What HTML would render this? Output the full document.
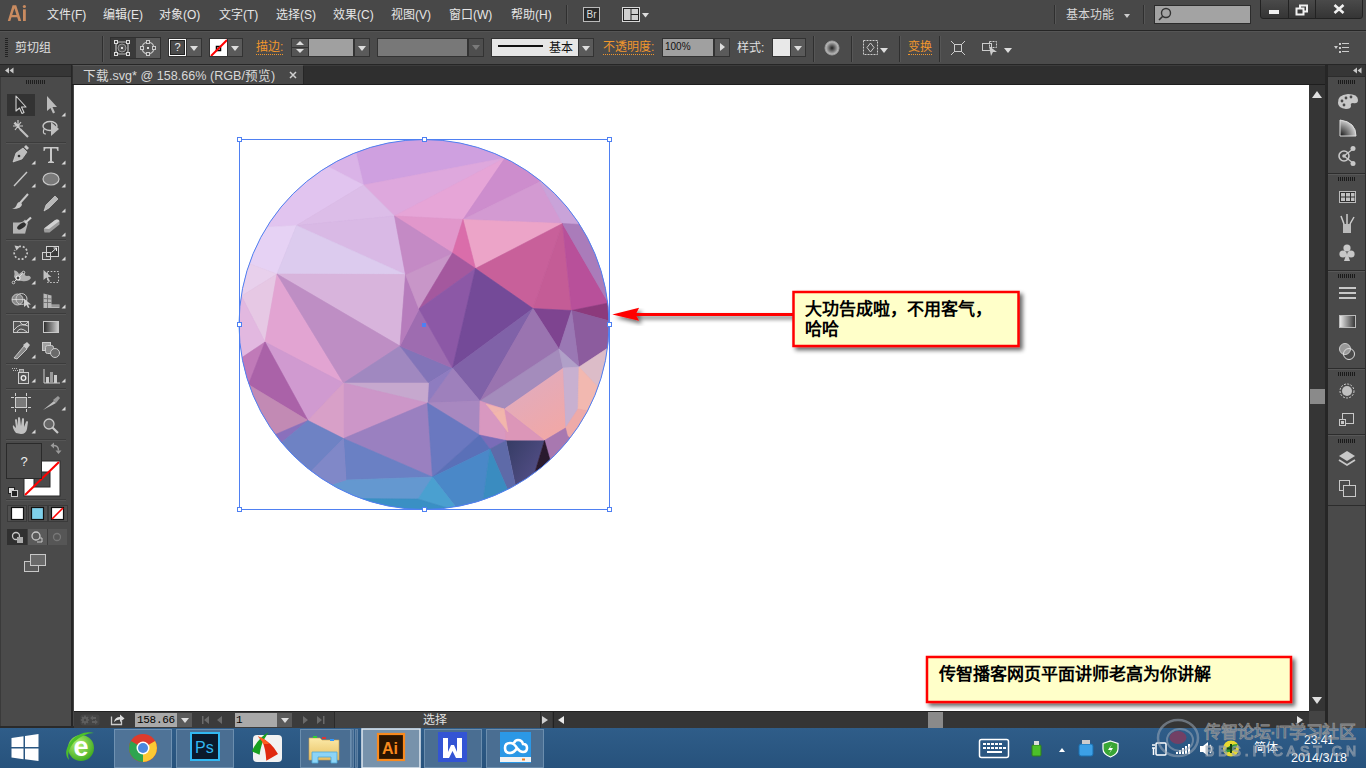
<!DOCTYPE html>
<html lang="zh-CN"><head><meta charset="utf-8">
<style>
*{margin:0;padding:0;box-sizing:border-box}
html,body{width:1366px;height:768px;overflow:hidden;background:#474747;font-family:"Liberation Sans",sans-serif;}
.a{position:absolute}
#menubar{left:0;top:0;width:1366px;height:31px;background:#484848;border-bottom:1px solid #262626}
#ctrl{left:0;top:31px;width:1366px;height:34px;background:#4b4b4b;border-top:1px solid #555;border-bottom:1px solid #262626}
.mi{position:absolute;top:7px;font-size:12px;color:#e6e6e6;line-height:16px;white-space:nowrap}
.sep{position:absolute;width:1px;background:#2f2f2f;border-right:1px solid #565656;width:2px}
.t12{position:absolute;font-size:12px;line-height:14px;color:#e0e0e0;white-space:nowrap}
.or{color:#f0962d}
.dd{position:absolute;background:#5a5a5a;border:1px solid #333}
.dd:after{content:"";position:absolute;left:50%;top:50%;margin-left:-4px;margin-top:-2px;border-left:4px solid transparent;border-right:4px solid transparent;border-top:5px solid #ddd}
#lpanel{left:0;top:65px;width:73px;height:663px;background:#4a4a4a}
#tabbar{left:72px;top:65px;width:1256px;height:20px;background:#2f2f2f}
#canvas{left:74px;top:85px;width:1235px;height:626px;background:#fff}
#vscroll{left:1309px;top:85px;width:16px;height:626px;background:#353535}
#rpanel{left:1328px;top:65px;width:38px;height:663px;background:#464646}
#hscroll{left:74px;top:711px;width:1235px;height:17px;background:#353535}
#taskbar{left:0;top:728px;width:1366px;height:40px;background:#2b5580}
</style></head><body>
<div id="menubar" class="a">
  <svg class="a" style="left:0;top:0" width="32" height="28"><path d="M12.6 5.2 L16.2 5.2 L21.2 21 L18.4 21 L17.2 17.3 L11.5 17.3 L10.3 21 L7.8 21Z M12.2 15 L16.5 15 L14.4 8.2Z" fill="#c98b60" fill-rule="evenodd"/><rect x="23" y="9.3" width="2.8" height="11.7" fill="#c98b60"/><circle cx="24.4" cy="6.5" r="1.6" fill="#c98b60"/></svg>
  <div class="mi" style="left:47px">文件(F)</div>
  <div class="mi" style="left:103px">编辑(E)</div>
  <div class="mi" style="left:159px">对象(O)</div>
  <div class="mi" style="left:219px">文字(T)</div>
  <div class="mi" style="left:276px">选择(S)</div>
  <div class="mi" style="left:333px">效果(C)</div>
  <div class="mi" style="left:391px">视图(V)</div>
  <div class="mi" style="left:449px">窗口(W)</div>
  <div class="mi" style="left:511px">帮助(H)</div>
  <div class="sep" style="left:566px;top:5px;height:19px"></div>
  <div class="a" style="left:583px;top:7px;width:17px;height:15px;border:1px solid #bbb;background:#2a2a2a;color:#ddd;font-size:10px;line-height:13px;text-align:center">Br</div>
  <svg class="a" style="left:620px;top:5px" width="32" height="20"><rect x="2.5" y="2.5" width="17" height="14" fill="#222" stroke="#d8d8d8"/><rect x="4" y="4" width="6.5" height="11" fill="#cfcfcf"/><rect x="11.5" y="4" width="6.5" height="5" fill="#cfcfcf"/><rect x="11.5" y="10" width="6.5" height="5" fill="#cfcfcf"/><path d="M22 8 L29 8 L25.5 12.5Z" fill="#ddd"/></svg>
  <div class="sep" style="left:1054px;top:5px;height:19px"></div>
  <div class="mi" style="left:1066px;color:#d6d6d6">基本功能</div>
  <div class="a" style="left:1124px;top:14px;border-left:3px solid transparent;border-right:3px solid transparent;border-top:4px solid #ccc"></div>
  <div class="sep" style="left:1143px;top:5px;height:19px"></div>
  <div class="a" style="left:1154px;top:5px;width:97px;height:19px;background:#a3a3a3;border:1px solid #2c2c2c"></div>
  <svg class="a" style="left:1157px;top:6px" width="16" height="16"><circle cx="9" cy="7" r="4.5" fill="none" stroke="#333" stroke-width="1.4"/><line x1="5.8" y1="10.2" x2="2" y2="14" stroke="#333" stroke-width="1.6"/></svg>
  <div class="a" style="left:1260px;top:-1px;width:103px;height:20px;background:linear-gradient(#4a4a4a,#353535);border:1px solid #222;border-radius:0 0 3px 3px"></div>
  <div class="a" style="left:1288px;top:0;width:1px;height:18px;background:#222"></div>
  <div class="a" style="left:1315px;top:0;width:1px;height:18px;background:#222"></div>
  <div class="a" style="left:1269px;top:10px;width:10px;height:4px;background:#f0f0f0"></div>
  <svg class="a" style="left:1295px;top:4px" width="14" height="12"><rect x="5" y="1.5" width="7" height="6" fill="none" stroke="#f0f0f0" stroke-width="2"/><rect x="1.5" y="4.5" width="7" height="6" fill="#3b3b3b" stroke="#f0f0f0" stroke-width="2"/></svg>
  <svg class="a" style="left:1333px;top:4px" width="12" height="10"><path d="M1.5 1 L10.5 9 M10.5 1 L1.5 9" stroke="#f0f0f0" stroke-width="2.6"/></svg>
</div>
<div id="ctrl" class="a">
  <div class="a" style="left:5px;top:6px;width:3px;height:20px;background:repeating-linear-gradient(180deg,#222 0,#222 1px,transparent 1px,transparent 2px)"></div>
  <div class="t12" style="left:15px;top:9px">剪切组</div>
  <div class="sep" style="left:102px;top:4px;height:26px"></div>
  <div class="a" style="left:110px;top:5px;width:51px;height:22px;background:#3a3a3a;border:1px solid #303030"></div>
  <div class="a" style="left:136px;top:6px;width:24px;height:20px;background:#5a5a5a"></div>
  <svg class="a" style="left:113px;top:8px" width="20" height="16"><rect x="3" y="2" width="12" height="12" rx="3" fill="none" stroke="#bbb" stroke-width="1.2"/><circle cx="9" cy="8" r="4" fill="#555" stroke="#999"/><rect x="8" y="7" width="2" height="2" fill="#ddd"/><g fill="#444" stroke="#ddd"><rect x="1.5" y="0.5" width="3" height="3"/><rect x="13.5" y="0.5" width="3" height="3"/><rect x="1.5" y="12.5" width="3" height="3"/><rect x="13.5" y="12.5" width="3" height="3"/></g></svg>
  <svg class="a" style="left:138px;top:7px" width="20" height="18"><circle cx="10" cy="9" r="6" fill="#555" stroke="#bbb" stroke-width="1.2"/><rect x="9" y="8" width="2" height="2" fill="#ddd"/><g fill="#555" stroke="#ccc"><rect x="8.5" y="1.5" width="3" height="3"/><rect x="2.5" y="7.5" width="3" height="3"/><rect x="14.5" y="7.5" width="3" height="3"/><rect x="8.5" y="13.5" width="3" height="3"/></g></svg>
  <div class="a" style="left:168px;top:6px;width:19px;height:19px;background:#fff;border:1px solid #333"></div>
  <div class="a" style="left:170px;top:8px;width:15px;height:15px;background:#4a4a4a;border:1px solid #222;color:#eee;font-size:11px;line-height:13px;text-align:center">?</div>
  <div class="dd" style="left:186px;top:6px;width:16px;height:19px"></div>
  <div class="a" style="left:209px;top:6px;width:19px;height:19px;background:#fff;border:1px solid #333;overflow:hidden"><svg width="19" height="19"><rect x="6.5" y="7.5" width="4" height="4" fill="none" stroke="#000" stroke-width="1.5"/><line x1="1" y1="17" x2="17" y2="1" stroke="#f00" stroke-width="2"/></svg></div>
  <div class="dd" style="left:227px;top:6px;width:16px;height:19px"></div>
  <div class="t12 or" style="left:256px;top:9px;border-bottom:1px dotted #f0962d;line-height:13px">描边:</div>
  <div class="a" style="left:291px;top:6px;width:18px;height:19px;background:#555;border:1px solid #333"></div><div class="a" style="left:292px;top:15px;width:16px;height:1px;background:#333"></div>
  <div class="a" style="left:296px;top:9px;border-left:4px solid transparent;border-right:4px solid transparent;border-bottom:4px solid #ddd"></div>
  <div class="a" style="left:296px;top:17px;border-left:4px solid transparent;border-right:4px solid transparent;border-top:4px solid #ddd"></div>
  <div class="a" style="left:309px;top:6px;width:45px;height:19px;background:#a0a0a0;border:1px solid #333;border-left:0"></div>
  <div class="dd" style="left:354px;top:6px;width:16px;height:19px"></div>
  <div class="a" style="left:377px;top:6px;width:91px;height:19px;background:#787878;border:1px solid #333"></div>
  <div class="a" style="left:468px;top:6px;width:16px;height:19px;background:#4e4e4e;border:1px solid #333"></div><div class="a" style="left:472px;top:13px;border-left:4px solid transparent;border-right:4px solid transparent;border-top:5px solid #7a7a7a"></div>
  <div class="a" style="left:491px;top:6px;width:88px;height:19px;background:#e6e6e6;border:1px solid #333"></div>
  <div class="a" style="left:498px;top:13px;width:45px;height:2px;background:#111"></div>
  <div class="t12" style="left:549px;top:9px;color:#111">基本</div>
  <div class="dd" style="left:578px;top:6px;width:16px;height:19px"></div>
  <div class="t12 or" style="left:603px;top:9px;border-bottom:1px dotted #f0962d;line-height:13px">不透明度:</div>
  <div class="a" style="left:662px;top:6px;width:52px;height:19px;background:#a0a0a0;border:1px solid #333;font-size:10px;line-height:16px;color:#111;padding-left:2px">100%</div>
  <div class="a" style="left:714px;top:6px;width:16px;height:19px;background:#5a5a5a;border:1px solid #333"></div><div class="a" style="left:720px;top:11px;border-top:4px solid transparent;border-bottom:4px solid transparent;border-left:5px solid #ddd"></div>
  <div class="t12" style="left:737px;top:9px">样式:</div>
  <div class="a" style="left:772px;top:6px;width:19px;height:19px;background:#e8e8e8;border:1px solid #333"></div>
  <div class="dd" style="left:790px;top:6px;width:16px;height:19px"></div>
  <div class="sep" style="left:813px;top:4px;height:26px"></div>
  <svg class="a" style="left:824px;top:8px" width="16" height="16"><defs><radialGradient id="rg"><stop offset="0" stop-color="#222"/><stop offset="1" stop-color="#ccc"/></radialGradient></defs><circle cx="8" cy="8" r="7" fill="url(#rg)" stroke="#999"/></svg>
  <div class="sep" style="left:851px;top:4px;height:26px"></div>
  <svg class="a" style="left:862px;top:7px" width="18" height="18"><rect x="1.5" y="1.5" width="14" height="14" fill="none" stroke="#ccc" stroke-dasharray="2 1"/><path d="M8.5 4 L12 8.5 L8.5 13 L5 8.5Z" fill="none" stroke="#ccc"/></svg>
  <div class="a" style="left:880px;top:16px;border-left:4px solid transparent;border-right:4px solid transparent;border-top:5px solid #ddd"></div>
  <div class="sep" style="left:899px;top:4px;height:26px"></div>
  <div class="t12 or" style="left:908px;top:9px;border-bottom:1px dotted #f0962d;line-height:13px">变换</div>
  <div class="sep" style="left:939px;top:4px;height:26px"></div>
  <svg class="a" style="left:950px;top:8px" width="16" height="16"><rect x="4.5" y="4.5" width="7" height="7" fill="none" stroke="#ccc"/><path d="M1 1 L4 4 M15 1 L12 4 M1 15 L4 12 M15 15 L12 12" stroke="#ccc"/></svg>
  <svg class="a" style="left:981px;top:7px" width="18" height="18"><rect x="1.5" y="4.5" width="9" height="7" fill="none" stroke="#ccc"/><rect x="8.5" y="2.5" width="7" height="6" fill="none" stroke="#ccc" stroke-dasharray="2 1"/><path d="M8 7 L16 13 L12 13 L10 17Z" fill="#ccc"/></svg>
  <div class="a" style="left:1004px;top:16px;border-left:4px solid transparent;border-right:4px solid transparent;border-top:5px solid #ddd"></div>
  <svg class="a" style="left:1334px;top:11px" width="16" height="10"><path d="M0 3 L4 3 L2 6Z" fill="#ccc"/><g fill="#ccc"><rect x="5" y="0" width="2" height="2"/><rect x="5" y="4" width="2" height="2"/><rect x="5" y="8" width="2" height="2"/><rect x="8" y="0" width="7" height="1"/><rect x="8" y="4" width="7" height="1"/><rect x="8" y="8" width="7" height="1"/></g></svg>
</div>
<div id="lpanel" class="a">
<svg width="73" height="663" style="position:absolute;left:0;top:0">
<defs>
<linearGradient id="gg" x1="0" x2="1"><stop offset="0" stop-color="#2a2a2a"/><stop offset="1" stop-color="#d0d0d0"/></linearGradient>
<g id="tri"><path d="M0.5 1.5 L4.5 -2.5 L4.5 1.5Z" fill="#d8d8d8"/></g>
</defs>
<rect x="0" y="0" width="71" height="11" fill="#363636"/>
<rect x="71" y="0" width="2" height="663" fill="#262626"/>
<path d="M5 5.5 L9 2.5 L9 8.5Z M9.5 5.5 L13.5 2.5 L13.5 8.5Z" fill="#c8c8c8"/>
<rect x="0" y="11" width="71" height="652" fill="#4a4a4a"/>
<rect x="0" y="11" width="1" height="652" fill="#3a3a3a"/>
<rect x="0" y="11" width="71" height="1" fill="#2a2a2a"/>
<g fill="#1e1e1e"><rect x="26" y="15" width="20" height="4"/></g>
<g fill="#4a4a4a"><rect x="27" y="15" width="1" height="4"/><rect x="29" y="15" width="1" height="4"/><rect x="31" y="15" width="1" height="4"/><rect x="33" y="15" width="1" height="4"/><rect x="35" y="15" width="1" height="4"/><rect x="37" y="15" width="1" height="4"/><rect x="39" y="15" width="1" height="4"/><rect x="41" y="15" width="1" height="4"/><rect x="43" y="15" width="1" height="4"/><rect x="45" y="15" width="1" height="4"/></g>
<!-- selected tool bg -->
<rect x="7" y="29" width="28" height="22" fill="#333"/>
<g transform="translate(0,-65)">
<!-- row 104 selection -->
<path d="M16 96 L16 111 L19.5 108 L22 113.5 L24 112.5 L21.5 107 L26 107Z" fill="#2e2e2e" stroke="#d0d0d0" stroke-width="1.1" stroke-linejoin="round"/>
<path d="M47 96 L47 111 L50.5 108 L53 113.5 L55 112.5 L52.5 107 L57 107Z" fill="#bcbcbc"/>
<use href="#tri" x="61" y="115"/>
<!-- row 129 magic wand / lasso -->
<g stroke="#c8c8c8" stroke-width="1.2"><path d="M14 123 L22 131 M18 120 L18 127 M13 126 L23 126 M15 122 L21 130 M21 122 L15 130"/></g>
<path d="M20 129 L28 137" stroke="#c0c0c0" stroke-width="2.2"/>
<ellipse cx="50" cy="126" rx="7" ry="4.5" fill="none" stroke="#c8c8c8" stroke-width="1.4"/>
<path d="M44 129 Q42 134 46 134" fill="none" stroke="#c8c8c8" stroke-width="1.2"/>
<path d="M51 122 L51 136 L59 129Z" fill="#c0c0c0"/>
<line x1="6" y1="142.5" x2="66" y2="142.5" stroke="#3c3c3c"/>
<line x1="6" y1="143.5" x2="66" y2="143.5" stroke="#555"/>
<!-- row 155 pen / T -->
<path d="M13 162 L16 153 L23 148 L27 152 L22 159Z" fill="#bdbdbd" stroke="#ddd" stroke-width="0.6"/>
<path d="M24 147 L26 145 L29 148 L27 150Z" fill="#c8c8c8"/>
<circle cx="19" cy="156" r="1.3" fill="#333"/>
<use href="#tri" x="31" y="163"/>
<path d="M43.5 147 L58.5 147 L58.5 151 L57.5 151 L56.5 148.5 L52 148.5 L52 161 L54 162 L54 163 L48 163 L48 162 L50 161 L50 148.5 L45.5 148.5 L44.5 151 L43.5 151Z" fill="#c8c8c8"/>
<use href="#tri" x="61" y="163"/>
<!-- row 179 line / ellipse -->
<line x1="14" y1="186" x2="27" y2="172" stroke="#c8c8c8" stroke-width="1.4"/>
<use href="#tri" x="31" y="186"/>
<ellipse cx="51" cy="179" rx="8" ry="6" fill="#7a7a7a" stroke="#c8c8c8" stroke-width="1.2"/>
<use href="#tri" x="61" y="186"/>
<!-- row 203 brush / pencil -->
<path d="M28 194 L20 203" stroke="#c8c8c8" stroke-width="2"/>
<path d="M12 209 Q16 208 17 204 Q19 200 22 204 Q22 209 12 209Z" fill="#c8c8c8"/>
<path d="M44 211 L46 205 L55 196 L58 199 L49 208Z" fill="#b8b8b8" stroke="#ddd" stroke-width="0.6"/>
<use href="#tri" x="61" y="211"/>
<!-- row 227 blob / eraser -->
<path d="M13 222.5 L19 222.5 Q23 222.5 25 219.5 L28 223 L26 230 L25 234 L13 234Z" fill="#b4b4b4"/>
<path d="M13 233 L25 233 L25 234 L13 234Z" fill="#8a8a8a"/>
<ellipse cx="21.5" cy="226" rx="5" ry="2.4" transform="rotate(-35 21.5 226)" fill="#2e2e2e"/>
<path d="M25 223 L31 217.5" stroke="#cfcfcf" stroke-width="2.2"/>
<path d="M44 228.5 L54.5 220.5 Q57.5 218.5 59.5 221 L59.5 224.5 L49.5 232.5 L44.5 232.5 Q43.5 230 44 228.5Z" fill="#9c9c9c"/>
<path d="M44 228.5 L54.5 220.5 Q57.5 218.5 59.5 221 L49 229Z" fill="#d2d2d2"/>
<use href="#tri" x="61" y="235"/>
<line x1="6" y1="239.5" x2="66" y2="239.5" stroke="#3c3c3c"/>
<line x1="6" y1="240.5" x2="66" y2="240.5" stroke="#555"/>
<!-- row 253 rotate / scale -->
<path d="M19 246.5 A6.5 6.5 0 1 1 14.8 250" fill="none" stroke="#c8c8c8" stroke-width="1.7" stroke-dasharray="2 1.8"/>
<path d="M14.5 245.5 L20 246.5 L16.5 250.5Z" fill="#c8c8c8"/>
<use href="#tri" x="31" y="259"/>
<rect x="46.5" y="246.5" width="12" height="10" fill="#3a3a3a" stroke="#cfcfcf"/>
<rect x="42.5" y="252.5" width="8" height="7" fill="none" stroke="#cfcfcf"/>
<path d="M51.5 252.5 L56.5 248 M53.5 248 L56.5 248 L56.5 251" stroke="#eee" fill="none"/>
<use href="#tri" x="61" y="259"/>
<!-- row 277 warp / free transform -->
<path d="M14 270.5 Q17 270 19 274 Q22 271 25 272 Q24 276 27 276 Q30 275 31 278 Q28 282 22 281 Q17 281 14 277 Q15 274 14 270.5Z" fill="#b0b0b0"/>
<path d="M13.5 282.5 L23.5 272.5" stroke="#e0e0e0" stroke-width="0.9"/>
<circle cx="18" cy="278" r="2" fill="#444" stroke="#f0f0f0" stroke-width="1.1"/>
<circle cx="13.5" cy="282.5" r="1.3" fill="#444" stroke="#e0e0e0" stroke-width="0.8"/>
<circle cx="23.5" cy="272.5" r="1.3" fill="#444" stroke="#e0e0e0" stroke-width="0.8"/>
<use href="#tri" x="31" y="283"/>
<rect x="47.5" y="271.5" width="11" height="11" fill="none" stroke="#c8c8c8" stroke-dasharray="1.6 1.6"/>
<path d="M43.5 270 L43.5 280 L46.5 277.5 L48.5 282 L50 281.3 L48 277 L51.5 277Z" fill="#c0c0c0"/>
<!-- row 301 shape builder / perspective -->
<circle cx="17.5" cy="299.5" r="5.5" fill="#8a8a8a" stroke="#c8c8c8"/>
<circle cx="21.5" cy="299" r="5.5" fill="none" stroke="#c8c8c8"/>
<path d="M12.5 299.5 L25 299.5" stroke="#fff" stroke-dasharray="1 1"/>
<path d="M24 298.5 L24 307 L26.5 305 L28 308 L29.5 307.5 L28 304.5 L31 304.5Z" fill="#cfcfcf"/>
<use href="#tri" x="31" y="307"/>
<path d="M43.5 293.5 L51.5 295.5 L51.5 304.5 L59.5 304.5 L59.5 308 L43.5 308Z" fill="#b8b8b8"/>
<path d="M47.5 294.5 L47.5 308 M43.5 298.5 L51.5 299 M43.5 302.5 L51.5 302.5 M51.5 306 L59.5 306" stroke="#666" stroke-width="0.8"/>
<use href="#tri" x="61" y="307"/>
<line x1="6" y1="313.5" x2="66" y2="313.5" stroke="#3c3c3c"/>
<line x1="6" y1="314.5" x2="66" y2="314.5" stroke="#555"/>
<!-- row 326 mesh / gradient -->
<rect x="13.5" y="321.5" width="15" height="11" fill="#555" stroke="#c8c8c8"/>
<path d="M14 330 Q20 322 28 326 M17 332 Q20 326 27 332 M20 322 Q24 328 28 322" stroke="#ddd" fill="none" stroke-width="0.9"/>
<rect x="43.5" y="321.5" width="15" height="11" fill="url(#gg)" stroke="#c8c8c8"/>
<!-- row 350 eyedropper / blend -->
<path d="M14 358 L24 346 L27 349 L17 359Z" fill="#888" stroke="#ddd" stroke-width="0.8"/>
<path d="M23 345 L27 342 L30 345 L27 349Z" fill="#c8c8c8"/>
<use href="#tri" x="31" y="357"/>
<rect x="42.5" y="342.5" width="8" height="8" fill="#a0a0a0" stroke="#ccc"/>
<rect x="45.5" y="345.5" width="8" height="8" rx="2" fill="#888" stroke="#ccc"/>
<circle cx="55" cy="353" r="4.5" fill="#6a6a6a" stroke="#ccc"/>
<line x1="6" y1="363.5" x2="66" y2="363.5" stroke="#3c3c3c"/>
<line x1="6" y1="364.5" x2="66" y2="364.5" stroke="#555"/>
<!-- row 376 sprayer / graph -->
<g fill="#bbb"><rect x="12" y="368" width="1" height="1"/><rect x="14" y="368" width="1" height="1"/><rect x="16" y="368" width="1" height="1"/><rect x="13" y="370" width="1" height="1"/><rect x="15" y="370" width="1" height="1"/><rect x="17" y="370" width="1" height="1"/></g>
<rect x="19.5" y="369.5" width="4" height="3" fill="#888" stroke="#ccc" stroke-width="0.8"/>
<rect x="18.5" y="372.5" width="10" height="11" fill="#555" stroke="#ccc"/>
<circle cx="23.5" cy="378" r="2.3" fill="none" stroke="#eee" stroke-width="1.3"/>
<use href="#tri" x="31" y="381"/>
<path d="M44 369 L44 383 L60 383" stroke="#ccc" fill="none"/>
<rect x="46" y="377" width="3" height="6" fill="#ccc"/><rect x="50" y="372" width="3" height="11" fill="#999"/><rect x="54" y="375" width="3" height="8" fill="#ccc"/>
<use href="#tri" x="61" y="381"/>
<line x1="6" y1="388.5" x2="66" y2="388.5" stroke="#3c3c3c"/>
<line x1="6" y1="389.5" x2="66" y2="389.5" stroke="#555"/>
<!-- row 403 artboard / slice -->
<rect x="15.5" y="397.5" width="11" height="10" fill="#7a7a7a" stroke="#d0d0d0"/>
<path d="M11 397.5 L14 397.5 M28 397.5 L31 397.5 M11 407.5 L14 407.5 M28 407.5 L31 407.5 M15.5 393 L15.5 396 M26.5 393 L26.5 396 M15.5 409 L15.5 412 M26.5 409 L26.5 412" stroke="#d0d0d0"/>
<path d="M43 410 L54 401 L56 403Z" fill="#bdbdbd"/><path d="M53 400 L58 396 L60 398 L56 403Z" fill="#999"/>
<use href="#tri" x="61" y="409"/>
<!-- row 426 hand / zoom -->
<path d="M16 433 Q12 428 13 425 L16 428 L15 420 Q16 418 17 420 L18 426 L18 418 Q19 416 20 418 L21 426 L22 419 Q23 417 24 419 L24 427 L26 422 Q27 420 28 422 L27 429 Q26 434 21 434Z" fill="#c0c0c0"/>
<use href="#tri" x="31" y="432"/>
<circle cx="49" cy="424" r="5" fill="#666" stroke="#c8c8c8" stroke-width="1.3"/>
<path d="M52.5 427.5 L58 433" stroke="#c8c8c8" stroke-width="2.2"/>
<line x1="6" y1="439.5" x2="66" y2="439.5" stroke="#3c3c3c"/>
<line x1="6" y1="440.5" x2="66" y2="440.5" stroke="#555"/>
<!-- fill / stroke -->
<rect x="24" y="461" width="36" height="35" fill="#fff" stroke="#2a2a2a"/>
<rect x="34" y="472" width="16" height="15" fill="#4a4a4a" stroke="#2a2a2a"/>
<line x1="25" y1="495" x2="59" y2="462" stroke="#f00" stroke-width="2"/>
<rect x="6.5" y="443.5" width="35" height="35" fill="#4a4a4a" stroke="#2a2a2a"/>
<text x="24" y="466" font-family="Liberation Sans" font-size="13" fill="#eee" text-anchor="middle">?</text>
<path d="M53.5 445.5 Q58.5 445.5 58.5 450.5" fill="none" stroke="#9a9a9a" stroke-width="1.4"/><path d="M50.5 445.5 L54 442.5 L54 448.5Z M58.5 454 L55.5 450.5 L61.5 450.5Z" fill="#9a9a9a"/>
<rect x="8.5" y="487.5" width="6" height="6" fill="#ddd" stroke="#222"/>
<rect x="11.5" y="490.5" width="6" height="6" fill="#222" stroke="#ccc"/>
<line x1="6" y1="499.5" x2="66" y2="499.5" stroke="#3c3c3c"/>
<line x1="6" y1="500.5" x2="66" y2="500.5" stroke="#555"/>
<!-- color modes -->
<rect x="7.5" y="505.5" width="19" height="16" fill="#505050" stroke="#3a3a3a"/>
<rect x="28.5" y="505.5" width="19" height="16" fill="#505050" stroke="#3a3a3a"/>
<rect x="48.5" y="505.5" width="19" height="16" fill="#505050" stroke="#3a3a3a"/>
<rect x="11.5" y="507.5" width="12" height="12" fill="#fff" stroke="#111" stroke-width="1.2"/>
<rect x="31.5" y="507.5" width="12" height="12" fill="#7fd0ea" stroke="#111" stroke-width="1.2"/>
<rect x="51.5" y="507.5" width="12" height="12" fill="#fff" stroke="#111" stroke-width="1.2"/>
<line x1="52" y1="519" x2="63" y2="508" stroke="#f00" stroke-width="1.6"/>
<!-- draw modes -->
<rect x="7" y="529" width="60" height="16" fill="#3e3e3e"/>
<rect x="7" y="529" width="20" height="16" fill="#303030"/>
<rect x="28" y="529" width="19" height="16" fill="#5a5a5a"/>
<rect x="48" y="529" width="19" height="16" fill="#565656"/>
<circle cx="16" cy="536" r="3.5" fill="none" stroke="#c8c8c8" stroke-width="1.3"/><rect x="17" y="537" width="6" height="6" fill="#aaa"/>
<circle cx="36" cy="536" r="4" fill="none" stroke="#c8c8c8" stroke-width="1.3"/><path d="M40 538 L42 538 L42 542 L37 542" stroke="#c8c8c8" fill="none"/>
<circle cx="57" cy="537" r="3.5" fill="none" stroke="#777" stroke-width="1.3"/>
<!-- screen mode -->
<rect x="24.5" y="561.5" width="14" height="10" fill="#5a5a5a" stroke="#c8c8c8"/>
<rect x="30.5" y="554.5" width="15" height="11" fill="#6a6a6a" stroke="#c8c8c8"/>
</g>
</svg>
</div>
<div id="tabbar" class="a">
  <div class="a" style="left:0;top:0;width:1256px;height:1px;background:#3c3c3c"></div><div class="a" style="left:1px;top:0;width:231px;height:19px;background:#484848;border-top:1px solid #565656;border-right:1px solid #262626"></div><div class="a" style="left:0;top:19px;width:1256px;height:1px;background:#1e1e1e"></div>
  <div class="a" style="left:11px;top:3px;font-size:12.6px;line-height:16px;color:#d8d8d8;white-space:nowrap">下载.svg* @ 158.66% (RGB/预览)</div>
  <svg class="a" style="left:217px;top:6px" width="8" height="8"><path d="M1 1 L7 7 M7 1 L1 7" stroke="#d0d0d0" stroke-width="1.5"/></svg>
</div>
<div id="canvas" class="a"></div>
<!--CANVAS--><svg class="a" style="left:74px;top:85px" width="1235" height="626" viewBox="74 85 1235 626">
<defs>
<linearGradient id="dsl" x1="0" y1="0" x2="1" y2="1"><stop offset="0" stop-color="#353c64"/><stop offset="1" stop-color="#64589a"/></linearGradient><linearGradient id="pch" x1="0" y1="0" x2="0.6" y2="1"><stop offset="0" stop-color="#dcacc4"/><stop offset="1" stop-color="#f0a8a8"/></linearGradient>
<clipPath id="cc"><circle cx="424" cy="324.5" r="185"/></clipPath>
<filter id="sh" x="-20%" y="-20%" width="150%" height="160%"><feGaussianBlur in="SourceAlpha" stdDeviation="2"/><feOffset dx="3" dy="3"/><feComponentTransfer><feFuncA type="linear" slope="0.6"/></feComponentTransfer><feMerge><feMergeNode/><feMergeNode in="SourceGraphic"/></feMerge></filter>
</defs>
<g clip-path="url(#cc)">
<rect x="239" y="139.5" width="370" height="370" fill="#c49ccc"/>
<polygon fill="#cfa0e0" stroke="#cfa0e0" stroke-width="0.6" points="356.0,153.0 346.6,129.3 384.6,118.2 424.0,114.5 424.0,139.0 424.0,114.5 471.1,119.9 515.9,135.7 505.0,158.0 363.5,185.0"/>
<polygon fill="#dab3e7" stroke="#dab3e7" stroke-width="0.6" points="327.0,166.0 314.4,145.4 346.6,129.3 356.0,153.0 363.5,185.0"/>
<polygon fill="#e1c4ef" stroke="#e1c4ef" stroke-width="0.6" points="268.0,227.0 245.9,213.2 276.2,175.3 314.4,145.4 327.0,166.0 363.5,185.0 296.5,225.5"/>
<polygon fill="#dea8dd" stroke="#dea8dd" stroke-width="0.6" points="363.5,185.0 505.0,158.0 394.5,216.0"/>
<polygon fill="#e6a5d7" stroke="#e6a5d7" stroke-width="0.6" points="394.5,216.0 505.0,158.0 463.0,219.5"/>
<polygon fill="#cd8dcd" stroke="#cd8dcd" stroke-width="0.6" points="463.0,219.5 505.0,158.0 515.9,135.7 556.2,161.4 539.5,182.0"/>
<polygon fill="#d39ad2" stroke="#d39ad2" stroke-width="0.6" points="463.0,219.5 539.5,182.0 562.5,223.5"/>
<polygon fill="#c9a3d9" stroke="#c9a3d9" stroke-width="0.6" points="562.5,223.5 539.5,182.0 556.2,161.4 580.5,184.5 600.8,211.2 580.0,224.5"/>
<polygon fill="#dcbde8" stroke="#dcbde8" stroke-width="0.6" points="296.5,225.5 363.5,185.0 394.5,216.0"/>
<polygon fill="#e6d2f4" stroke="#e6d2f4" stroke-width="0.6" points="268.0,227.0 296.5,225.5 277.0,274.0 250.0,264.0 225.6,255.5 245.9,213.2"/>
<polygon fill="#d9b9e5" stroke="#d9b9e5" stroke-width="0.6" points="296.5,225.5 394.5,216.0 405.5,274.5"/>
<polygon fill="#dccbee" stroke="#dccbee" stroke-width="0.6" points="296.5,225.5 405.5,274.5 277.0,274.0"/>
<polygon fill="#e8d0ec" stroke="#e8d0ec" stroke-width="0.6" points="250.0,264.0 277.0,274.0 241.5,296.0 216.5,292.1 225.6,255.5"/>
<polygon fill="#e6c8e4" stroke="#e6c8e4" stroke-width="0.6" points="241.5,296.0 277.0,274.0 265.0,342.0"/>
<polygon fill="#e2b8e0" stroke="#e2b8e0" stroke-width="0.6" points="241.5,296.0 265.0,342.0 242.0,357.5 217.4,362.0 214.0,327.1 216.5,292.1"/>
<polygon fill="#e2a4d2" stroke="#e2a4d2" stroke-width="0.6" points="277.0,274.0 265.0,342.0 343.5,383.0"/>
<polygon fill="#d8b4dc" stroke="#d8b4dc" stroke-width="0.6" points="277.0,274.0 405.5,274.5 400.0,346.0"/>
<polygon fill="#be8ec4" stroke="#be8ec4" stroke-width="0.6" points="277.0,274.0 400.0,346.0 343.5,383.0"/>
<polygon fill="#a088c0" stroke="#a088c0" stroke-width="0.6" points="343.5,383.0 400.0,346.0 428.5,383.0"/>
<polygon fill="#8274b8" stroke="#8274b8" stroke-width="0.6" points="400.0,346.0 452.5,368.0 428.5,383.0"/>
<polygon fill="#9e6cb0" stroke="#9e6cb0" stroke-width="0.6" points="400.0,346.0 419.0,309.0 452.5,368.0"/>
<polygon fill="#b67cbc" stroke="#b67cbc" stroke-width="0.6" points="405.5,274.5 419.0,309.0 400.0,346.0"/>
<polygon fill="#c896c8" stroke="#c896c8" stroke-width="0.6" points="405.5,274.5 452.5,253.0 419.0,309.0"/>
<polygon fill="#e197cb" stroke="#e197cb" stroke-width="0.6" points="394.5,216.0 463.0,219.5 452.5,253.0"/>
<polygon fill="#c48ac5" stroke="#c48ac5" stroke-width="0.6" points="394.5,216.0 452.5,253.0 405.5,274.5"/>
<polygon fill="#eca4c8" stroke="#eca4c8" stroke-width="0.6" points="463.0,219.5 562.5,223.5 475.5,268.5"/>
<polygon fill="#da6daa" stroke="#da6daa" stroke-width="0.6" points="463.0,219.5 475.5,268.5 452.5,253.0"/>
<polygon fill="#a4589e" stroke="#a4589e" stroke-width="0.6" points="452.5,253.0 475.5,268.5 419.0,309.0"/>
<polygon fill="#c8609a" stroke="#c8609a" stroke-width="0.6" points="475.5,268.5 562.5,223.5 533.0,308.5"/>
<polygon fill="#c45c96" stroke="#c45c96" stroke-width="0.6" points="533.0,308.5 562.5,223.5 571.5,310.5"/>
<polygon fill="#b8509a" stroke="#b8509a" stroke-width="0.6" points="571.5,310.5 562.5,223.5 608.5,303.0"/>
<polygon fill="#aa7cba" stroke="#aa7cba" stroke-width="0.6" points="562.5,223.5 580.0,224.5 600.8,211.2 621.8,253.9 632.6,300.2 608.5,303.0"/>
<polygon fill="#8c3a7c" stroke="#8c3a7c" stroke-width="0.6" points="571.5,310.5 608.5,303.0 632.6,300.2 634.0,320.5 609.5,321.0"/>
<polygon fill="#8c58a6" stroke="#8c58a6" stroke-width="0.6" points="419.0,309.0 475.5,268.5 452.5,368.0"/>
<polygon fill="#744a98" stroke="#744a98" stroke-width="0.6" points="475.5,268.5 533.0,308.5 452.5,368.0"/>
<polygon fill="#7e4490" stroke="#7e4490" stroke-width="0.6" points="533.0,308.5 571.5,310.5 559.0,349.0"/>
<polygon fill="#8c5c9e" stroke="#8c5c9e" stroke-width="0.6" points="571.5,310.5 609.5,321.0 634.0,320.5 632.5,349.8 609.5,347.0 579.0,367.0"/>
<polygon fill="#9a78b4" stroke="#9a78b4" stroke-width="0.6" points="559.0,349.0 571.5,310.5 579.0,367.0"/>
<polygon fill="#8062a8" stroke="#8062a8" stroke-width="0.6" points="452.5,368.0 533.0,308.5 480.0,401.0"/>
<polygon fill="#9a74b0" stroke="#9a74b0" stroke-width="0.6" points="533.0,308.5 559.0,349.0 504.0,409.0 480.0,401.0"/>
<polygon fill="#a48cbc" stroke="#a48cbc" stroke-width="0.6" points="480.0,401.0 559.0,349.0 563.0,368.0 504.0,409.0"/>
<polygon fill="#b0a0c8" stroke="#b0a0c8" stroke-width="0.6" points="559.0,349.0 579.0,367.0 563.0,368.0"/>
<polygon fill="#dcbcc8" stroke="#dcbcc8" stroke-width="0.6" points="579.0,367.0 609.5,347.0 632.5,349.8 621.9,394.8 597.0,386.0"/>
<polygon fill="#c8b0d0" stroke="#c8b0d0" stroke-width="0.6" points="563.0,368.0 579.0,367.0 578.0,409.0 565.5,428.0"/>
<polygon fill="#f2b8b0" stroke="#f2b8b0" stroke-width="0.6" points="579.0,367.0 597.0,386.0 621.9,394.8 609.9,422.2 588.5,411.0 578.0,409.0"/>
<polygon fill="#eeaaa8" stroke="#eeaaa8" stroke-width="0.6" points="565.5,428.0 578.0,409.0 588.5,411.0 609.9,422.2 589.8,453.3 567.5,436.0"/>
<polygon fill="url(#pch)" stroke="none" stroke-width="0.6" points="504.0,409.0 563.0,368.0 565.5,428.0 544.5,440.5"/>
<polygon fill="#9e80bc" stroke="#9e80bc" stroke-width="0.6" points="452.5,368.0 480.0,401.0 427.5,403.0"/>
<polygon fill="#8e7cc0" stroke="#8e7cc0" stroke-width="0.6" points="428.5,383.0 452.5,368.0 427.5,403.0"/>
<polygon fill="#c6a8ce" stroke="#c6a8ce" stroke-width="0.6" points="343.5,383.0 428.5,383.0 427.5,403.0"/>
<polygon fill="#cc96c8" stroke="#cc96c8" stroke-width="0.6" points="343.5,383.0 427.5,403.0 343.5,438.5"/>
<polygon fill="#9a80c0" stroke="#9a80c0" stroke-width="0.6" points="343.5,438.5 427.5,403.0 432.5,477.0"/>
<polygon fill="#6a80c4" stroke="#6a80c4" stroke-width="0.6" points="343.5,438.5 432.5,477.0 346.0,480.0"/>
<polygon fill="#a888c0" stroke="#a888c0" stroke-width="0.6" points="427.5,403.0 480.0,401.0 479.5,435.0"/>
<polygon fill="#6a78c0" stroke="#6a78c0" stroke-width="0.6" points="427.5,403.0 479.5,435.0 432.5,477.0"/>
<polygon fill="#d898c0" stroke="#d898c0" stroke-width="0.6" points="480.0,401.0 504.0,409.0 506.0,440.5 479.5,435.0"/>
<polygon fill="#dc96b8" stroke="#dc96b8" stroke-width="0.6" points="504.0,409.0 544.5,440.5 506.0,440.5"/>
<polygon fill="#a878b0" stroke="#a878b0" stroke-width="0.6" points="544.5,440.5 565.5,428.0 567.5,436.0 589.8,453.3 567.0,478.3 550.0,460.0"/>
<polygon fill="url(#dsl)" stroke="none" stroke-width="0.6" points="506.0,440.5 544.5,440.5 535.0,472.0 550.3,492.3 527.5,507.2 515.5,486.0"/>
<polygon fill="#2a1a2e" stroke="#2a1a2e" stroke-width="0.6" points="544.5,440.5 550.0,460.0 567.0,478.3 550.3,492.3 535.0,472.0"/>
<polygon fill="#7a6cb8" stroke="#7a6cb8" stroke-width="0.6" points="479.5,435.0 506.0,440.5 490.0,449.0"/>
<polygon fill="#5a70b8" stroke="#5a70b8" stroke-width="0.6" points="432.5,477.0 479.5,435.0 490.0,449.0"/>
<polygon fill="#4a88c8" stroke="#4a88c8" stroke-width="0.6" points="432.5,477.0 490.0,449.0 483.0,501.0 490.6,523.7 461.5,531.1 457.5,509.0"/>
<polygon fill="#5e6aa8" stroke="#5e6aa8" stroke-width="0.6" points="490.0,449.0 506.0,440.5 515.5,486.0 527.5,507.2 518.8,511.9 508.0,490.5"/>
<polygon fill="#3a8cc0" stroke="#3a8cc0" stroke-width="0.6" points="490.0,449.0 508.0,490.5 518.8,511.9 490.6,523.7 483.0,501.0"/>
<polygon fill="#6498d0" stroke="#6498d0" stroke-width="0.6" points="346.0,480.0 432.5,477.0 418.0,499.0 362.0,498.5 353.5,522.3 334.4,514.4 345.0,492.0 334.4,514.4 319.9,506.9 333.0,484.0"/>
<polygon fill="#4aa0d0" stroke="#4aa0d0" stroke-width="0.6" points="418.0,499.0 432.5,477.0 457.5,509.0 461.5,531.1 454.4,532.3 451.0,509.0"/>
<polygon fill="#3a90c4" stroke="#3a90c4" stroke-width="0.6" points="362.0,498.5 418.0,499.0 451.0,509.0 454.4,532.3 424.0,534.5 424.0,510.0 424.0,534.5 388.2,531.4 353.5,522.3"/>
<polygon fill="#d09ad0" stroke="#d09ad0" stroke-width="0.6" points="265.0,342.0 343.5,383.0 308.0,420.5"/>
<polygon fill="#d8a0c8" stroke="#d8a0c8" stroke-width="0.6" points="308.0,420.5 343.5,383.0 343.5,438.5"/>
<polygon fill="#c07ab8" stroke="#c07ab8" stroke-width="0.6" points="242.0,357.5 265.0,342.0 248.5,384.6 225.3,392.5 217.4,362.0"/>
<polygon fill="#aa62a8" stroke="#aa62a8" stroke-width="0.6" points="248.5,384.6 265.0,342.0 308.0,420.5"/>
<polygon fill="#c28ab4" stroke="#c28ab4" stroke-width="0.6" points="248.5,384.6 308.0,420.5 276.5,434.0 255.4,449.7 238.1,422.3 225.3,392.5"/>
<polygon fill="#8a70bc" stroke="#8a70bc" stroke-width="0.6" points="276.5,434.0 308.0,420.5 281.5,442.5 262.3,458.4 255.4,449.7"/>
<polygon fill="#6e82c4" stroke="#6e82c4" stroke-width="0.6" points="281.5,442.5 308.0,420.5 343.5,438.5 312.0,470.5 296.2,491.1 262.3,458.4"/>
<polygon fill="#8088c8" stroke="#8088c8" stroke-width="0.6" points="312.0,470.5 343.5,438.5 346.0,480.0 333.0,484.0 319.9,506.9 296.2,491.1"/>
<polygon fill="#f0b4b0" stroke="#f0b4b0" stroke-width="0.6" points="486.0,404.0 504.0,409.0 493.5,413.0"/>
<polygon fill="#f2b6ac" stroke="#f2b6ac" stroke-width="0.6" points="493.5,413.0 504.0,409.0 508.0,432.0"/>
</g>
<circle cx="424" cy="324.5" r="185" fill="none" stroke="#4f80f2" stroke-width="1"/>
<rect x="239.5" y="139.5" width="370" height="370" fill="none" stroke="#4f80f2" stroke-width="1"/>
<g fill="#fff" stroke="#4f80f2" stroke-width="1">
<rect x="237.5" y="137.5" width="4" height="4"/><rect x="422.5" y="137.5" width="4" height="4"/><rect x="607.5" y="137.5" width="4" height="4"/>
<rect x="237.5" y="322.5" width="4" height="4"/><rect x="607.5" y="322.5" width="4" height="4"/>
<rect x="237.5" y="507.5" width="4" height="4"/><rect x="422.5" y="507.5" width="4" height="4"/><rect x="607.5" y="507.5" width="4" height="4"/>
</g>
<rect x="422" y="323" width="4" height="4" fill="#4f80f2"/>
<g filter="url(#sh)">
<path d="M612.3 314.4 L639.1 307.8 L636.5 313 L794 313 L794 316 L636.5 316 L639.1 320.8Z" fill="#ff0000"/>
</g>
<g filter="url(#sh)">
<rect x="793.5" y="292" width="225" height="54" fill="#ffffc9" stroke="#ff0000" stroke-width="2.5"/>
</g>
<g filter="url(#sh)">
<rect x="927" y="657" width="364" height="45" fill="#ffffc9" stroke="#ff0000" stroke-width="2.5"/>
</g>
</svg>
<div class="a" style="left:805px;top:300px;font-size:17px;line-height:20px;font-weight:bold;color:#000;white-space:nowrap">大功告成啦，不用客气，<br>哈哈</div>
<div class="a" style="left:939px;top:665px;font-size:17px;line-height:20px;font-weight:bold;color:#000;white-space:nowrap">传智播客网页平面讲师老高为你讲解</div>
<!--/CANVAS-->
<div id="vscroll" class="a">
  <div class="a" style="left:3px;top:6px;border-left:5px solid transparent;border-right:5px solid transparent;border-bottom:7px solid #e0e0e0"></div>
  <div class="a" style="left:1px;top:304px;width:15px;height:15px;background:#8a8a8a"></div>
  <div class="a" style="left:3px;top:612px;border-left:5px solid transparent;border-right:5px solid transparent;border-top:7px solid #e0e0e0"></div>
</div>
<div id="rpanel" class="a">
<svg width="38" height="663" style="position:absolute;left:0;top:0">
<rect x="0" y="0" width="38" height="11" fill="#363636"/>
<path d="M25 5.5 L29 2.5 L29 8.5Z M29.5 5.5 L33.5 2.5 L33.5 8.5Z" fill="#c8c8c8"/>
<rect x="0" y="11" width="38" height="652" fill="#4a4a4a"/>
<g stroke="#2c2c2c"><line x1="0" y1="11.5" x2="38" y2="11.5"/><line x1="0" y1="108.5" x2="38" y2="108.5"/><line x1="0" y1="205.5" x2="38" y2="205.5"/><line x1="0" y1="303.5" x2="38" y2="303.5"/><line x1="0" y1="369.5" x2="38" y2="369.5"/><line x1="0" y1="440.5" x2="38" y2="440.5"/></g>
<g stroke="#585858"><line x1="0" y1="109.5" x2="38" y2="109.5"/><line x1="0" y1="206.5" x2="38" y2="206.5"/><line x1="0" y1="304.5" x2="38" y2="304.5"/><line x1="0" y1="370.5" x2="38" y2="370.5"/></g>
<rect x="10" y="15" width="18" height="4" fill="#1a1a1a"/><rect x="11" y="15" width="1" height="4" fill="#4a4a4a"/><rect x="13" y="15" width="1" height="4" fill="#4a4a4a"/><rect x="15" y="15" width="1" height="4" fill="#4a4a4a"/><rect x="17" y="15" width="1" height="4" fill="#4a4a4a"/><rect x="19" y="15" width="1" height="4" fill="#4a4a4a"/><rect x="21" y="15" width="1" height="4" fill="#4a4a4a"/><rect x="23" y="15" width="1" height="4" fill="#4a4a4a"/><rect x="25" y="15" width="1" height="4" fill="#4a4a4a"/><rect x="27" y="15" width="1" height="4" fill="#4a4a4a"/><rect x="10" y="112" width="18" height="4" fill="#1a1a1a"/><rect x="11" y="112" width="1" height="4" fill="#4a4a4a"/><rect x="13" y="112" width="1" height="4" fill="#4a4a4a"/><rect x="15" y="112" width="1" height="4" fill="#4a4a4a"/><rect x="17" y="112" width="1" height="4" fill="#4a4a4a"/><rect x="19" y="112" width="1" height="4" fill="#4a4a4a"/><rect x="21" y="112" width="1" height="4" fill="#4a4a4a"/><rect x="23" y="112" width="1" height="4" fill="#4a4a4a"/><rect x="25" y="112" width="1" height="4" fill="#4a4a4a"/><rect x="27" y="112" width="1" height="4" fill="#4a4a4a"/><rect x="10" y="209" width="18" height="4" fill="#1a1a1a"/><rect x="11" y="209" width="1" height="4" fill="#4a4a4a"/><rect x="13" y="209" width="1" height="4" fill="#4a4a4a"/><rect x="15" y="209" width="1" height="4" fill="#4a4a4a"/><rect x="17" y="209" width="1" height="4" fill="#4a4a4a"/><rect x="19" y="209" width="1" height="4" fill="#4a4a4a"/><rect x="21" y="209" width="1" height="4" fill="#4a4a4a"/><rect x="23" y="209" width="1" height="4" fill="#4a4a4a"/><rect x="25" y="209" width="1" height="4" fill="#4a4a4a"/><rect x="27" y="209" width="1" height="4" fill="#4a4a4a"/><rect x="10" y="307" width="18" height="4" fill="#1a1a1a"/><rect x="11" y="307" width="1" height="4" fill="#4a4a4a"/><rect x="13" y="307" width="1" height="4" fill="#4a4a4a"/><rect x="15" y="307" width="1" height="4" fill="#4a4a4a"/><rect x="17" y="307" width="1" height="4" fill="#4a4a4a"/><rect x="19" y="307" width="1" height="4" fill="#4a4a4a"/><rect x="21" y="307" width="1" height="4" fill="#4a4a4a"/><rect x="23" y="307" width="1" height="4" fill="#4a4a4a"/><rect x="25" y="307" width="1" height="4" fill="#4a4a4a"/><rect x="27" y="307" width="1" height="4" fill="#4a4a4a"/><rect x="10" y="374" width="18" height="4" fill="#1a1a1a"/><rect x="11" y="374" width="1" height="4" fill="#4a4a4a"/><rect x="13" y="374" width="1" height="4" fill="#4a4a4a"/><rect x="15" y="374" width="1" height="4" fill="#4a4a4a"/><rect x="17" y="374" width="1" height="4" fill="#4a4a4a"/><rect x="19" y="374" width="1" height="4" fill="#4a4a4a"/><rect x="21" y="374" width="1" height="4" fill="#4a4a4a"/><rect x="23" y="374" width="1" height="4" fill="#4a4a4a"/><rect x="25" y="374" width="1" height="4" fill="#4a4a4a"/><rect x="27" y="374" width="1" height="4" fill="#4a4a4a"/>
<rect x="37" y="0" width="1" height="663" fill="#2e2e2e"/>
<g transform="translate(-1328,-65)">
<!-- palette 101 -->
<path d="M1338 103 Q1337 95 1348 94 Q1358 94 1358 100 Q1358 104 1353 103 Q1350 103 1351 106 Q1351 109 1346 109 Q1338 108 1338 103Z" fill="#c8c8c8"/>
<g fill="#4a4a4a"><circle cx="1342" cy="101" r="1.4"/><circle cx="1346" cy="98" r="1.4"/><circle cx="1351" cy="97" r="1.4"/><circle cx="1344" cy="105" r="1.4"/></g>
<!-- gradient wedge 128 -->
<defs><radialGradient id="wg" cx="0" cy="1" r="1.1"><stop offset="0" stop-color="#111"/><stop offset="1" stop-color="#e0e0e0"/></radialGradient></defs><path d="M1340 120 L1340 136 L1356 136 Q1356 122 1340 120Z" fill="url(#wg)" stroke="#ddd"/>
<!-- symbols 156 -->
<circle cx="1344" cy="156" r="5" fill="none" stroke="#c8c8c8" stroke-width="1.6"/>
<circle cx="1344" cy="156" r="1.8" fill="#c8c8c8"/>
<path d="M1344 156 L1353 149 M1344 156 L1353 163" stroke="#c8c8c8" stroke-width="1.3"/>
<circle cx="1353" cy="148.5" r="2.5" fill="#c8c8c8"/><circle cx="1353" cy="163.5" r="2.5" fill="#c8c8c8"/>
<!-- swatches 197 -->
<rect x="1339.5" y="191.5" width="16" height="11" fill="#2f2f2f" stroke="#bbb"/>
<g fill="#c0c0c0"><rect x="1341" y="193" width="4" height="3.5"/><rect x="1346" y="193" width="4" height="3.5"/><rect x="1351" y="193" width="3.5" height="3.5"/><rect x="1341" y="197.5" width="4" height="3.5"/><rect x="1346" y="197.5" width="4" height="3.5"/><rect x="1351" y="197.5" width="3.5" height="3.5"/></g>
<!-- brushes 225 -->
<rect x="1343" y="224" width="8" height="9" fill="#bbb"/>
<path d="M1344 224 L1341 216 M1347 224 L1347 214 M1350 224 L1354 217" stroke="#ccc" stroke-width="1.5"/>
<!-- club 253 -->
<circle cx="1347" cy="248" r="3.6" fill="#c8c8c8"/><circle cx="1343" cy="254" r="3.6" fill="#c8c8c8"/><circle cx="1351" cy="254" r="3.6" fill="#c8c8c8"/>
<path d="M1347 252 L1344 261 L1350 261Z" fill="#c8c8c8"/>
<!-- stroke 293 -->
<g fill="#c8c8c8"><rect x="1339" y="287" width="17" height="2"/><rect x="1339" y="292" width="17" height="2"/><rect x="1339" y="297" width="17" height="2"/></g>
<!-- gradient 322 -->
<defs><linearGradient id="rg2" x1="0" x2="1"><stop offset="0" stop-color="#eee"/><stop offset="1" stop-color="#333"/></linearGradient></defs>
<rect x="1339.5" y="315.5" width="16" height="12" fill="url(#rg2)" stroke="#bbb"/>
<!-- transparency 352 -->
<circle cx="1345" cy="349" r="5.5" fill="#999" stroke="#ccc"/><circle cx="1349" cy="354" r="5.5" fill="none" stroke="#ddd"/>
<!-- appearance 390 -->
<circle cx="1347" cy="391" r="7" fill="none" stroke="#ccc" stroke-dasharray="2 1.3"/><circle cx="1347" cy="391" r="5" fill="#c0c0c0"/>
<!-- graphic styles 419 -->
<rect x="1342.5" y="413.5" width="11" height="10" fill="none" stroke="#c8c8c8"/>
<rect x="1339.5" y="419.5" width="6" height="6" fill="#4a4a4a" stroke="#c8c8c8"/>
<rect x="1341" y="421" width="3" height="3" fill="#c8c8c8"/>
<!-- layers 460 -->
<path d="M1347 451 L1355 456 L1347 461 L1339 456Z" fill="#c8c8c8"/>
<path d="M1339 460 L1347 465 L1355 460" fill="none" stroke="#c8c8c8" stroke-width="1.8"/>
<!-- artboards 489 -->
<rect x="1339.5" y="480.5" width="10" height="10" fill="none" stroke="#c8c8c8"/>
<rect x="1343.5" y="485.5" width="12" height="11" fill="#4a4a4a" stroke="#c8c8c8"/>
</g>
<rect x="0" y="505" width="38" height="1" fill="#2c2c2c" transform="translate(0,-65)"/>
</svg>
</div>
<div id="hscroll" class="a">
  <div class="a" style="left:0;top:0;width:1235px;height:1px;background:#222"></div>
  <div class="a" style="left:0;top:1px;width:261px;height:16px;background:#3b3b3b"></div>
  <svg class="a" style="left:6px;top:3px" width="24" height="13"><rect x="0.5" y="0.5" width="19" height="11" rx="2" fill="#444"/><circle cx="5" cy="6" r="3.2" fill="#5e5e5e"/><g stroke="#5e5e5e" stroke-width="1.6"><path d="M5 1.5 L5 10.5 M0.8 6 L9.2 6 M2 3 L8 9 M8 3 L2 9"/></g><circle cx="5" cy="6" r="1.2" fill="#444"/><path d="M10 4 L13 1.5 L13 3 L16 3 L16 5 L13 5 L13 6.5Z M18 8 L15 10.5 L15 9 L12 9 L12 7 L15 7 L15 5.5Z" fill="#5e5e5e"/></svg>
  <svg class="a" style="left:36px;top:2px" width="16" height="13"><path d="M1.5 3.5 L1.5 11.5 L11.5 11.5 L11.5 8" fill="none" stroke="#ccc" stroke-width="1.3"/><path d="M4 9 Q5 4 10 4 L10 1.5 L14.5 5.5 L10 9 L10 6.5 Q6 6.5 4 9Z" fill="#ddd"/></svg>
  <div class="a" style="left:61px;top:2px;width:42px;height:14px;background:#a9a9a9;font-family:'Liberation Mono',monospace;font-size:11px;line-height:14px;color:#000;padding-left:2px;letter-spacing:-0.3px">158.66</div>
  <div class="a" style="left:103px;top:2px;width:15px;height:14px;background:#5a5a5a"></div>
  <div class="a" style="left:107px;top:7px;border-left:4px solid transparent;border-right:4px solid transparent;border-top:5px solid #ddd"></div>
  <svg class="a" style="left:127px;top:4px" width="30" height="10"><rect x="1" y="1" width="1.5" height="8" fill="#6a6a6a"/><path d="M8 1 L3 5 L8 9Z M21 1 L16 5 L21 9Z" fill="#6a6a6a"/></svg>
  <div class="a" style="left:161px;top:2px;width:42px;height:14px;background:#a9a9a9;font-family:'Liberation Mono',monospace;font-size:11px;line-height:14px;color:#000;padding-left:1px">1</div>
  <div class="a" style="left:203px;top:2px;width:15px;height:14px;background:#5a5a5a"></div>
  <div class="a" style="left:207px;top:7px;border-left:4px solid transparent;border-right:4px solid transparent;border-top:5px solid #ddd"></div>
  <svg class="a" style="left:228px;top:4px" width="30" height="10"><path d="M1 1 L6 5 L1 9Z M15 1 L20 5 L15 9Z" fill="#6a6a6a"/><rect x="21" y="1" width="1.5" height="8" fill="#6a6a6a"/></svg>
  <div class="a" style="left:260px;top:1px;width:1px;height:16px;background:#2a2a2a"></div>
  <div class="a" style="left:261px;top:1px;width:205px;height:16px;background:#424242"></div>
  <div class="a" style="left:349px;top:1px;font-size:12px;line-height:16px;color:#e0e0e0">选择</div>
  <div class="a" style="left:466px;top:1px;width:12px;height:16px;background:#3d3d3d;border-left:1px solid #2a2a2a"></div>
  <div class="a" style="left:468px;top:5px;border-top:4px solid transparent;border-bottom:4px solid transparent;border-left:6px solid #d0d0d0"></div>
  <div class="a" style="left:479px;top:1px;width:1px;height:16px;background:#222"></div>
  <div class="a" style="left:484px;top:5px;border-top:4px solid transparent;border-bottom:4px solid transparent;border-right:6px solid #e8e8e8"></div>
  <div class="a" style="left:854px;top:1px;width:15px;height:16px;background:#8a8a8a"></div>
  <div class="a" style="left:1223px;top:5px;border-top:4px solid transparent;border-bottom:4px solid transparent;border-left:6px solid #e0e0e0"></div>
</div>
<div class="a" style="left:1309px;top:711px;width:16px;height:17px;background:#444"></div>
<div class="a" style="left:1325px;top:65px;width:3px;height:663px;background:#262626"></div>
<div class="a" style="left:0;top:726px;width:74px;height:2px;background:#2a2a2a"></div>
<div id="taskbar" class="a">
<svg width="1366" height="40" style="position:absolute;left:0;top:0">
<defs>
<linearGradient id="tbg" x1="0" y1="0" x2="0" y2="1"><stop offset="0" stop-color="#2f5d89"/><stop offset="1" stop-color="#27527c"/></linearGradient>
<radialGradient id="ieg" cx="0.4" cy="0.35" r="0.7"><stop offset="0" stop-color="#b8f070"/><stop offset="1" stop-color="#3aa81e"/></radialGradient>
<linearGradient id="fold" x1="0" y1="0" x2="0" y2="1"><stop offset="0" stop-color="#fbe9a8"/><stop offset="1" stop-color="#e8c060"/></linearGradient>
</defs>
<rect width="1366" height="40" fill="url(#tbg)"/>
<g transform="translate(0,-728)">
<!-- windows logo -->
<path d="M11.5 738 L23.5 736.2 L23.5 747 L11.5 747Z M25 736 L38.5 734 L38.5 747 L25 747Z M11.5 748.5 L23.5 748.5 L23.5 759.3 L11.5 757.6Z M25 748.5 L38.5 748.5 L38.5 761 L25 759.3Z" fill="#fff"/>
<!-- 360 browser -->
<circle cx="81" cy="748" r="13" fill="url(#ieg)"/>
<text x="81" y="756" font-family="Liberation Sans" font-weight="bold" font-size="27" fill="#fff" text-anchor="middle">e</text>
<path d="M69 760 Q62 752 72 740 Q82 730 94 733 Q84 733 74 742 Q66 752 69 760Z" fill="#4cc02a"/>
<!-- chrome button -->
<rect x="114.5" y="729.5" width="57" height="38" fill="#4f7397" stroke="#7d9dbb" stroke-opacity="0.8"/>
<circle cx="143" cy="748" r="14" fill="#dd3b2c"/>
<path d="M143 748 L155.1 741 A14 14 0 0 1 143 762Z" fill="#fcc934"/>
<path d="M143 748 L143 762 A14 14 0 0 1 130.9 741Z" fill="#2ea44f"/>
<path d="M143 748 L155.1 741 L143 741Z M143 748 L130.9 741 L137 751Z" fill="none"/>
<circle cx="143" cy="748" r="6.5" fill="#fff"/>
<circle cx="143" cy="748" r="5" fill="#4b88de"/>
<!-- ps button -->
<rect x="176.5" y="729.5" width="57" height="38" fill="#4a6e92" stroke="#7898b7" stroke-opacity="0.8"/>
<rect x="191" y="733" width="28" height="27" fill="#0b1a2c" stroke="#31b8f2" stroke-width="2"/>
<text x="195" y="753" font-family="Liberation Sans" font-size="16" fill="#31b8f2">Ps</text>
<!-- faststone -->
<rect x="253" y="735" width="29" height="27" rx="4" fill="#f2f2f2"/>
<path d="M268.5 732.3 Q258 738 251.8 751.3 L259.6 754.7 Q261 744 264.6 738.4 Z" fill="#18a020"/><path d="M257.9 736.2 Q272 742 278 754.1 L266.3 760.8 Q265.5 748 262.4 741.8 Z" fill="#e02a10"/><path d="M257.9 736.2 Q266 739 269 744 L263 744 Q262.5 742 262.4 741.8Z" fill="#ff6020"/>
<!-- explorer button -->
<rect x="300.5" y="729.5" width="50" height="38" fill="#4a6e92" stroke="#7898b7" stroke-opacity="0.8"/>
<rect x="351.5" y="729.5" width="2" height="38" fill="#4a6e92" stroke="#7898b7" stroke-opacity="0.6"/>
<rect x="355.5" y="729.5" width="2" height="38" fill="#4a6e92" stroke="#7898b7" stroke-opacity="0.6"/>
<path d="M309 738 L320 738 L322 740 L339 740 L339 760 L309 760Z" fill="url(#fold)" stroke="#c9a050" stroke-width="0.6"/>
<rect x="313" y="736" width="4" height="2" fill="#3c3"/><rect x="322" y="737" width="4" height="2" fill="#d33"/><rect x="330" y="739" width="4" height="2" fill="#39f"/>
<path d="M312 752 L337 752 L337 763 L331 763 L331 757 L318 757 L318 763 L312 763Z" fill="#8cd4f6" stroke="#4fa8d8" stroke-width="0.8"/>
<!-- ai button active -->
<rect x="362" y="729" width="58" height="39" fill="#7792ab" stroke="#e0e8f0" stroke-width="1.5"/>
<rect x="378" y="734" width="26" height="26" fill="#2b1400" stroke="#f98a1e" stroke-width="2.2"/>
<text x="382" y="754" font-family="Liberation Sans" font-weight="bold" font-size="16" fill="#f98a1e">Ai</text>
<!-- wps -->
<rect x="424.5" y="729.5" width="57" height="38" fill="#4a6e92" stroke="#7898b7" stroke-opacity="0.8"/>
<rect x="438" y="732" width="29" height="30" fill="#3354d4"/>
<path d="M443 738 L448 738 L448 752 L451 745 L454 745 L457 752 L457 738 L462 738 L462 758 L456 758 L452.5 751 L449 758 L443 758Z" fill="#fff"/>
<!-- cloud -->
<rect x="486.5" y="729.5" width="57" height="38" fill="#4a6e92" stroke="#7898b7" stroke-opacity="0.8"/>
<rect x="500" y="732" width="31" height="31" fill="#2b98e6"/>
<rect x="500" y="757" width="31" height="5" fill="#f2f2f2"/>
<rect x="522" y="758.5" width="3" height="2" fill="#f08020"/>
<path d="M505 748 Q505 743 510 743 Q514 743 517 748 Q520 752 523 752 Q527 752 527 748 Q527 744 523 744 Q522 740 518 740 Q515 740 514 743 M517 748 Q514 753 510 753 Q505 753 505 748" fill="none" stroke="#fff" stroke-width="2.6"/>
<!-- tray -->
<rect x="979.5" y="739.5" width="29" height="18" rx="2" fill="none" stroke="#fff" stroke-width="1.5"/>
<g fill="#fff"><rect x="983" y="743" width="3" height="2"/><rect x="987" y="743" width="3" height="2"/><rect x="991" y="743" width="3" height="2"/><rect x="995" y="743" width="3" height="2"/><rect x="999" y="743" width="3" height="2"/><rect x="983" y="747" width="3" height="2"/><rect x="987" y="747" width="3" height="2"/><rect x="991" y="747" width="3" height="2"/><rect x="995" y="747" width="3" height="2"/><rect x="999" y="747" width="3" height="2"/><rect x="1003" y="747" width="3" height="2"/><rect x="987" y="751" width="15" height="2"/></g>
<rect x="1032" y="745" width="9" height="11" rx="1" fill="#4cbf2a" stroke="#2f7f1a"/>
<rect x="1034" y="741" width="5" height="4" fill="#ddd"/>
<path d="M1059 752 L1062 748 L1065 752Z" fill="#fff"/>
<rect x="1079" y="744" width="14" height="12" rx="2" fill="#3ca0e6" stroke="#1a70b0"/>
<rect x="1082" y="740" width="8" height="4" fill="#ccc"/>
<path d="M1110.5 741 L1118 743.5 L1118 749 Q1118 754 1110.5 757 Q1103 754 1103 749 L1103 743.5Z" fill="#3aa635" stroke="#fff" stroke-width="1.2"/>
<path d="M1112 744 L1108 750 L1111 750 L1109 754 L1113 748 L1110 748Z" fill="#fff"/>
<!-- power -->
<rect x="1156" y="743" width="10" height="12" rx="1" fill="none" stroke="#fff" stroke-width="1.5"/>
<path d="M1152 745 L1155 745 M1152 748 L1155 748 M1153.5 748 L1153.5 755" stroke="#fff" stroke-width="1.5"/>
<!-- signal -->
<g fill="#fff"><rect x="1176" y="752" width="2" height="2"/><rect x="1179" y="750" width="2" height="4"/><rect x="1182" y="748" width="2" height="6"/><rect x="1185" y="746" width="2" height="8"/><rect x="1188" y="744" width="2" height="10"/></g>
<!-- volume -->
<path d="M1200 746 L1203 746 L1208 742 L1208 756 L1203 752 L1200 752Z" fill="#fff"/>
<path d="M1210 745 Q1213 749 1210 753" fill="none" stroke="#fff" stroke-width="1.3"/>
<!-- 360 -->
<circle cx="1231" cy="748.5" r="8" fill="#e8d830"/>
<path d="M1224 752 Q1228 744 1238 744 Q1234 754 1224 752Z" fill="#2e9a2e"/>
<path d="M1231 744 L1231 753 M1226.5 748.5 L1235.5 748.5" stroke="#164016" stroke-width="2"/>
</g>
<div></div>
</svg>
<div class="a" style="left:1254px;top:13px;font-size:12px;line-height:14px;color:#fff">简体</div>
<div class="a" style="left:1304px;top:5px;font-size:12px;line-height:14px;color:#fff">23:41</div>
<div class="a" style="left:1291px;top:23px;font-size:12.6px;line-height:14px;color:#fff">2014/3/18</div>
</div>
<svg class="a" style="left:1140px;top:705px" width="226" height="63" viewBox="1140 705 226 63">
<g opacity="0.55">
<ellipse cx="1178" cy="738" rx="20" ry="18" fill="none" stroke="#9aa8b8" stroke-width="2.5"/>
<ellipse cx="1180" cy="740" rx="13" ry="11" fill="none" stroke="#9aa8b8" stroke-width="2"/>
</g>
<ellipse cx="1178" cy="737.5" rx="8.5" ry="6.5" fill="#7a3d62" opacity="0.9"/>
<text x="1204" y="738" font-family="Liberation Sans" font-size="17" fill="#202830" fill-opacity="0.25" stroke="#a0a0a0" stroke-width="1" stroke-opacity="0.8" letter-spacing="-0.5">传智论坛·IT学习社区</text>
<text x="1205" y="756" font-family="Liberation Sans" font-size="14" fill="none" stroke="#9aa4b0" stroke-width="1.2" opacity="0.7" textLength="151" lengthAdjust="spacing">BBS.ITCAST.CN</text>
</svg>
</body></html>
